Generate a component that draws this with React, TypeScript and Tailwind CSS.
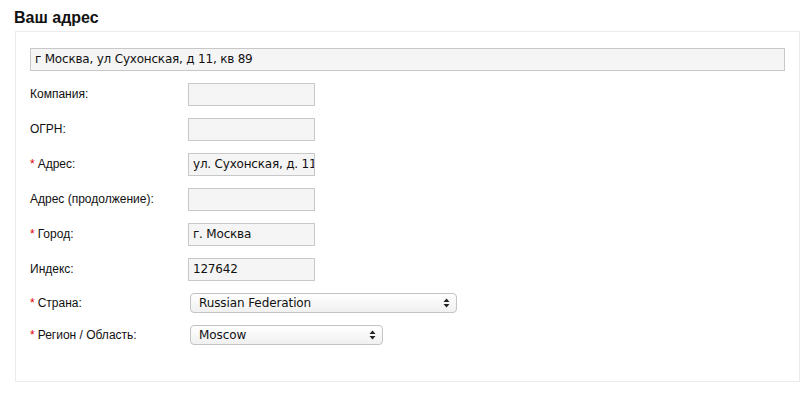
import React from "react";

interface Row {
  label: string;
  required?: boolean;
  value?: string;
}

const rows: Row[] = [
  { label: "Компания:" },
  { label: "ОГРН:" },
  { label: "Адрес:", required: true, value: "ул. Сухонская, д. 11" },
  { label: "Адрес (продолжение):" },
  { label: "Город:", required: true, value: "г. Москва" },
  { label: "Индекс:", value: "127642" },
];

const selects: { label: string; value: string; width: string }[] = [
  { label: "Страна:", value: "Russian Federation", width: "w-[267px]" },
  { label: "Регион / Область:", value: "Moscow", width: "w-[193px]" },
];

const inputCls =
  "h-[23px] border border-[#c8c8c8] bg-[#f5f5f5] pl-[4px] text-[12px] tracking-[-0.2px] text-[#111] outline-none font-['DejaVu_Sans',sans-serif]";

const Label: React.FC<{ text: string; required?: boolean }> = ({ text, required }) => (
  <div className="w-[158px] shrink-0 text-[12px] text-[#111]">
    {required && <span className="text-[#e00000] mr-[3px]">*</span>}
    {text}
  </div>
);

const Arrows = () => (
  <svg width="7" height="10" viewBox="0 0 7 10" className="absolute right-[6px] top-[4px]">
    <path d="M3.5 0.5 L6.5 4 H0.5 Z" fill="#222" />
    <path d="M3.5 9.5 L6.5 6 H0.5 Z" fill="#222" />
  </svg>
);

export default function App() {
  return (
    <div className="w-[812px] h-[396px] bg-white font-['Liberation_Sans',Arial,sans-serif]">
      <h2 className="pl-[14px] pt-[6px] h-[31px] text-[16px] font-bold text-[#111]">Ваш адрес</h2>
      <div className="ml-[15px] w-[785px] h-[351px] border border-[#ebebeb] pl-[14px] pr-[14px] pt-[14px]">
        <input readOnly defaultValue="г Москва, ул Сухонская, д 11, кв 89" className={`${inputCls} w-full`} />
        <div className="mt-[12px] flex flex-col gap-[12px]">
          {rows.map((r) => (
            <div key={r.label} className="flex items-center">
              <Label text={r.label} required={r.required} />
              <input readOnly defaultValue={r.value ?? ""} className={`${inputCls} w-[127px]`} />
            </div>
          ))}
          {selects.map((s) => (
            <div key={s.label} className="flex items-center">
              <Label text={s.label} required />
              <div
                className={`relative ml-[2px] h-[20px] ${s.width} rounded-[4px] border border-[#c4c4c4] bg-gradient-to-b from-white to-[#f0f0f0] pl-[8px] text-[12px] tracking-[-0.1px] leading-[18px] text-[#111] font-['DejaVu_Sans',sans-serif]`}
              >
                {s.value}
                <Arrows />
              </div>
            </div>
          ))}
        </div>
      </div>
    </div>
  );
}
